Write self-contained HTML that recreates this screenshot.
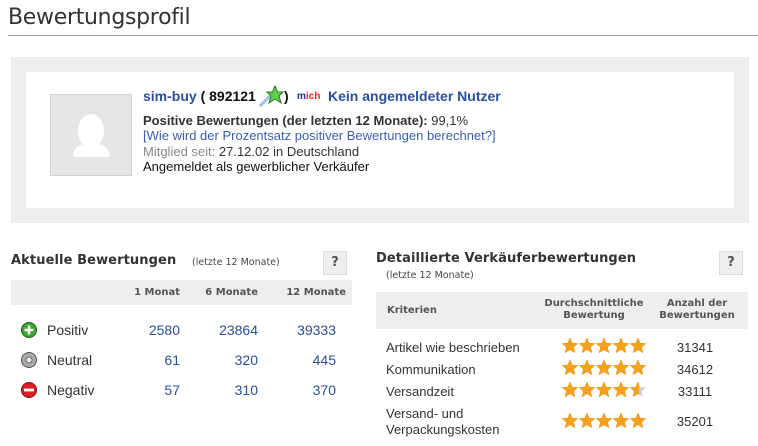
<!DOCTYPE html>
<html><head><meta charset="utf-8"><style>
*{margin:0;padding:0;box-sizing:border-box}
body{width:758px;height:446px;background:#fff;position:relative;overflow:hidden;font-family:"Liberation Sans",Arial,sans-serif;color:#333}
.a{position:absolute;white-space:nowrap}
.v{font-family:"DejaVu Sans",Verdana,sans-serif}
.blue{color:#2b4f9a}
.q{position:absolute;width:24px;height:24px;background:#eee;border:1px solid #ddd;font:bold 13px "DejaVu Sans",sans-serif;color:#555;text-align:center;line-height:22px}
.r{text-align:right}
.c{text-align:center}
</style></head><body>
<div class="a" style="left:8px;top:5px;font-size:22px;color:#333;font-family:'DejaVu Sans',sans-serif;letter-spacing:-0.3px">Bewertungsprofil</div>
<div class="a" style="left:8px;top:35px;width:750px;height:1px;background:#999"></div>

<div class="a" style="left:11px;top:57px;width:738px;height:166px;background:#eeeeee"></div>
<div class="a" style="left:26px;top:72px;width:708px;height:136px;background:#fff"></div>
<div class="a" style="left:50px;top:94px;width:82px;height:82px;background:#e6e6e6;border:1px solid #d4d4d4">
<svg width="80" height="80" viewBox="0 0 80 80"><ellipse cx="40" cy="36" rx="13" ry="17" fill="#fff"/><path d="M22 60 Q23 51 33 49 L47 49 Q57 51 59 60 Q59 62 56 62 L25 62 Q22 62 22 60Z" fill="#fff"/></svg></div>
<div class="a" style="left:143px;top:88px;font-size:14px;font-weight:bold"><span class="blue">sim-buy</span> <span style="color:#111">( 892121</span></div>
<svg class="a" style="left:258px;top:84px" width="26" height="24" viewBox="0 0 26 24"><path d="M2 22 L12 12" stroke="#9bc0ec" stroke-width="3"/><polygon points="17,2 19.5,8 25,8 21,12 23,19 17,15 11,19 13,12 9,8 14.5,8" fill="#5cd14a" stroke="#2a7a1e" stroke-width="1"/></svg>
<div class="a" style="left:284px;top:88px;font-size:14px;font-weight:bold;color:#111">)</div>
<div class="a" style="left:297px;top:91px;font-size:10px;font-weight:bold"><span style="color:#1a2f9a">m</span><span style="color:#e22">ich</span></div>
<div class="a blue" style="left:328px;top:88px;font-size:14px;font-weight:bold">Kein angemeldeter Nutzer</div>
<div class="a" style="left:143px;top:113px;font-size:13px;font-weight:bold;color:#333">Positive Bewertungen (der letzten 12 Monate): <span style="font-weight:normal">99,1%</span></div>
<div class="a" style="left:143px;top:128px;font-size:13px;color:#3a5fb0">[Wie wird der Prozentsatz positiver Bewertungen berechnet?]</div>
<div class="a" style="left:143px;top:144px;font-size:13px;color:#888">Mitglied seit: <span style="color:#333">27.12.02 in Deutschland</span></div>
<div class="a" style="left:143px;top:159px;font-size:13px;color:#111">Angemeldet als gewerblicher Verkäufer</div>

<div class="a v" style="left:11px;top:253px;font-size:13px;font-weight:bold;color:#333;letter-spacing:0.1px">Aktuelle Bewertungen</div>
<div class="a v" style="left:192px;top:257px;font-size:9.5px;color:#444">(letzte 12 Monate)</div>
<div class="q" style="left:323px;top:251px">?</div>
<div class="a" style="left:11px;top:280px;width:341px;height:25px;background:#eee"></div>
<div class="a v r" style="left:100px;top:287px;width:80px;font-size:10px;font-weight:bold;color:#555">1 Monat</div>
<div class="a v r" style="left:170px;top:287px;width:88px;font-size:10px;font-weight:bold;color:#555">6 Monate</div>
<div class="a v r" style="left:250px;top:287px;width:96px;font-size:10px;font-weight:bold;color:#555">12 Monate</div>
<svg class="a" style="left:20px;top:322px" width="18" height="80" viewBox="0 0 18 80">
<circle cx="9" cy="8" r="7.5" fill="#3aa82e" stroke="#1e5e17"/><path d="M4.5 8h9M9 3.5v9" stroke="#fff" stroke-width="2.6"/>
<circle cx="9" cy="38" r="7.5" fill="#aaa" stroke="#555"/><circle cx="9" cy="38" r="3" fill="#eee" stroke="#666"/>
<circle cx="9" cy="68" r="7.5" fill="#e02020" stroke="#7a0d0d"/><path d="M4 68h10" stroke="#fff" stroke-width="2.8"/></svg>
<div class="a" style="left:47px;top:322px;font-size:14px;color:#333">Positiv</div>
<div class="a" style="left:47px;top:352px;font-size:14px;color:#333">Neutral</div>
<div class="a" style="left:47px;top:382px;font-size:14px;color:#333">Negativ</div>
<div class="a blue r" style="left:80px;top:322px;width:100px;font-size:14px">2580</div>
<div class="a blue r" style="left:80px;top:352px;width:100px;font-size:14px">61</div>
<div class="a blue r" style="left:80px;top:382px;width:100px;font-size:14px">57</div>
<div class="a blue r" style="left:140px;top:322px;width:118px;font-size:14px">23864</div>
<div class="a blue r" style="left:140px;top:352px;width:118px;font-size:14px">320</div>
<div class="a blue r" style="left:140px;top:382px;width:118px;font-size:14px">310</div>
<div class="a blue r" style="left:220px;top:322px;width:116px;font-size:14px">39333</div>
<div class="a blue r" style="left:220px;top:352px;width:116px;font-size:14px">445</div>
<div class="a blue r" style="left:220px;top:382px;width:116px;font-size:14px">370</div>

<div class="a v" style="left:376px;top:251px;font-size:13px;font-weight:bold;color:#333;letter-spacing:0.1px">Detaillierte Verkäuferbewertungen</div>
<div class="a v" style="left:386px;top:270px;font-size:9.5px;color:#444">(letzte 12 Monate)</div>
<div class="q" style="left:719px;top:251px">?</div>
<div class="a" style="left:376px;top:292px;width:372px;height:37px;background:#eee"></div>
<div class="a v" style="left:387px;top:305px;font-size:10px;font-weight:bold;color:#555">Kriterien</div>
<div class="a v c" style="left:534px;top:298px;width:120px;font-size:10px;font-weight:bold;color:#555;line-height:12px;white-space:normal">Durchschnittliche Bewertung</div>
<div class="a v c" style="left:650px;top:298px;width:94px;font-size:10px;font-weight:bold;color:#555;line-height:12px;white-space:normal">Anzahl der Bewertungen</div>
<div class="a" style="left:386px;top:340px;font-size:13px;color:#333">Artikel wie beschrieben</div>
<div class="a" style="left:386px;top:362px;font-size:13px;color:#333">Kommunikation</div>
<div class="a" style="left:386px;top:384px;font-size:13px;color:#333">Versandzeit</div>
<div class="a" style="left:386px;top:406px;font-size:13px;color:#333;line-height:16px">Versand- und<br>Verpackungskosten</div>
<svg class="a" style="left:561px;top:338px" width="86" height="96" viewBox="0 0 86 96">
<defs>
<polygon id="s" points="8,0 10.2,5.2 15.8,5.6 11.5,9.2 12.9,14.7 8,11.7 3.1,14.7 4.5,9.2 0.2,5.6 5.8,5.2" fill="#f7a21b" stroke="#e08a10" stroke-width="0.5"/>
<polygon id="g" points="8,0 10.2,5.2 15.8,5.6 11.5,9.2 12.9,14.7 8,11.7 3.1,14.7 4.5,9.2 0.2,5.6 5.8,5.2" fill="#ccc"/>
<clipPath id="h"><rect x="0" y="0" width="9" height="16"/></clipPath>
</defs>
<g><use href="#s" x="1"/><use href="#s" x="18"/><use href="#s" x="35"/><use href="#s" x="52"/><use href="#s" x="69"/></g>
<g transform="translate(0,22)"><use href="#s" x="1"/><use href="#s" x="18"/><use href="#s" x="35"/><use href="#s" x="52"/><use href="#s" x="69"/></g>
<g transform="translate(0,44)"><use href="#s" x="1"/><use href="#s" x="18"/><use href="#s" x="35"/><use href="#s" x="52"/><use href="#g" x="69"/><g transform="translate(69,0)"><use href="#s" clip-path="url(#h)"/></g></g>
<g transform="translate(0,75)"><use href="#s" x="1"/><use href="#s" x="18"/><use href="#s" x="35"/><use href="#s" x="52"/><use href="#s" x="69"/></g>
</svg>
<div class="a c" style="left:660px;top:340px;width:70px;font-size:13px;color:#333">31341</div>
<div class="a c" style="left:660px;top:362px;width:70px;font-size:13px;color:#333">34612</div>
<div class="a c" style="left:660px;top:384px;width:70px;font-size:13px;color:#333">33111</div>
<div class="a c" style="left:660px;top:414px;width:70px;font-size:13px;color:#333">35201</div>
</body></html>
